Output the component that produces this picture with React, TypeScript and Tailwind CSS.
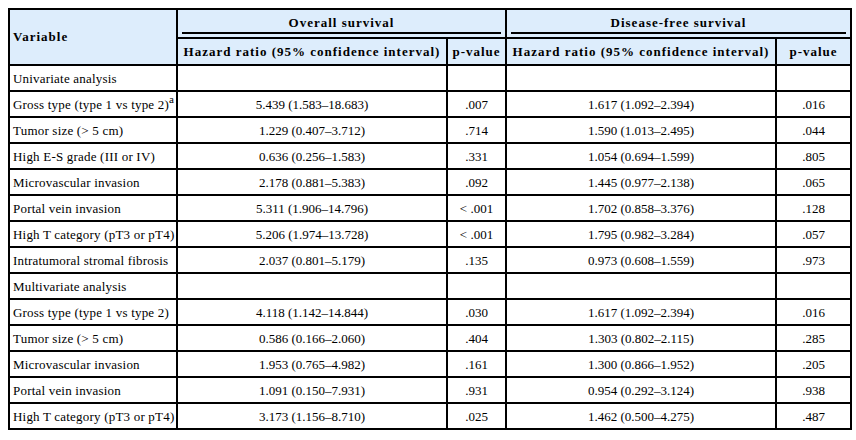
type Row = {
  label: string;
  sup?: string;
  osHr?: string;
  osP?: string;
  dfsHr?: string;
  dfsP?: string;
  section?: boolean;
};

const rows: Row[] = [
  { label: "Univariate analysis", section: true },
  { label: "Gross type (type 1 vs type 2)", sup: "a", osHr: "5.439 (1.583–18.683)", osP: ".007", dfsHr: "1.617 (1.092–2.394)", dfsP: ".016" },
  { label: "Tumor size (> 5 cm)", osHr: "1.229 (0.407–3.712)", osP: ".714", dfsHr: "1.590 (1.013–2.495)", dfsP: ".044" },
  { label: "High E-S grade (III or IV)", osHr: "0.636 (0.256–1.583)", osP: ".331", dfsHr: "1.054 (0.694–1.599)", dfsP: ".805" },
  { label: "Microvascular invasion", osHr: "2.178 (0.881–5.383)", osP: ".092", dfsHr: "1.445 (0.977–2.138)", dfsP: ".065" },
  { label: "Portal vein invasion", osHr: "5.311 (1.906–14.796)", osP: "< .001", dfsHr: "1.702 (0.858–3.376)", dfsP: ".128" },
  { label: "High T category (pT3 or pT4)", osHr: "5.206 (1.974–13.728)", osP: "< .001", dfsHr: "1.795 (0.982–3.284)", dfsP: ".057" },
  { label: "Intratumoral stromal fibrosis", osHr: "2.037 (0.801–5.179)", osP: ".135", dfsHr: "0.973 (0.608–1.559)", dfsP: ".973" },
  { label: "Multivariate analysis", section: true },
  { label: "Gross type (type 1 vs type 2)", osHr: "4.118 (1.142–14.844)", osP: ".030", dfsHr: "1.617 (1.092–2.394)", dfsP: ".016" },
  { label: "Tumor size (> 5 cm)", osHr: "0.586 (0.166–2.060)", osP: ".404", dfsHr: "1.303 (0.802–2.115)", dfsP: ".285" },
  { label: "Microvascular invasion", osHr: "1.953 (0.765–4.982)", osP: ".161", dfsHr: "1.300 (0.866–1.952)", dfsP: ".205" },
  { label: "Portal vein invasion", osHr: "1.091 (0.150–7.931)", osP: ".931", dfsHr: "0.954 (0.292–3.124)", dfsP: ".938" },
  { label: "High T category (pT3 or pT4)", osHr: "3.173 (1.156–8.710)", osP: ".025", dfsHr: "1.462 (0.500–4.275)", dfsP: ".487" },
];

const th = "border-2 border-black bg-[#ddedfc] font-bold text-[13px] tracking-[1px] text-black";
const td = "border-2 border-black h-[26px] px-1 py-0 text-[13px] text-black leading-none";

export default function App() {
  return (
    <div className="min-h-[440px] bg-white p-2 font-['Liberation_Serif',serif]">
      <table className="w-[842px] table-fixed border-collapse">
        <colgroup>
          <col className="w-[168px]" />
          <col className="w-[270px]" />
          <col className="w-[59px]" />
          <col className="w-[270px]" />
          <col className="w-[75px]" />
        </colgroup>
        <thead>
          <tr>
            <th rowSpan={2} className={`${th} pl-[3px] text-left`}>
              Variable
            </th>
            <th colSpan={2} className={`${th} h-[29px] border-b px-1 pt-[5px] pb-[2px]`}>
              <div className="border-b-2 border-black pb-[3px] text-center leading-none">
                Overall survival
              </div>
            </th>
            <th colSpan={2} className={`${th} h-[29px] border-b px-1 pt-[5px] pb-[2px]`}>
              <div className="border-b-2 border-black pb-[3px] text-center leading-none">
                Disease-free survival
              </div>
            </th>
          </tr>
          <tr>
            <th className={`${th} h-[27px] px-1 text-center whitespace-nowrap`}>
              Hazard ratio (95% confidence interval)
            </th>
            <th className={`${th} px-1 text-center`}>p-value</th>
            <th className={`${th} px-1 text-center whitespace-nowrap`}>
              Hazard ratio (95% confidence interval)
            </th>
            <th className={`${th} px-1 text-center`}>p-value</th>
          </tr>
        </thead>
        <tbody>
          {rows.map((r, i) => (
            <tr key={i}>
              <td className={`${td} pl-[3px] text-left whitespace-nowrap tracking-[0.2px]`}>
                {r.label}
                {r.sup && <sup className="text-[11px]">{r.sup}</sup>}
              </td>
              <td className={`${td} text-center`}>{r.osHr}</td>
              <td className={`${td} text-center`}>{r.osP}</td>
              <td className={`${td} text-center`}>{r.dfsHr}</td>
              <td className={`${td} text-center`}>{r.dfsP}</td>
            </tr>
          ))}
        </tbody>
      </table>
    </div>
  );
}
